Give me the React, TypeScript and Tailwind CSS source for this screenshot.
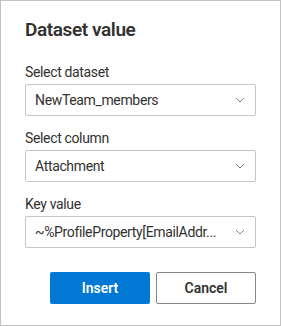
import React from "react";

function Chevron() {
  return (
    <svg width="10" height="6" viewBox="0 0 10 6" className="shrink-0">
      <path d="M1 1 L5 5 L9 1" fill="none" stroke="#797775" strokeWidth="0.9" />
    </svg>
  );
}

function Field({ label, value }: { label: string; value: string }) {
  return (
    <div className="flex flex-col">
      <div className="h-5 leading-5 text-[14px] tracking-[-0.35px] text-[#323130] mb-[2px]">{label}</div>
      <div className="flex items-center h-8 border border-[#c8c6c4] rounded-[2px] pl-[9px] pr-[10px] gap-2">
        <span className="flex-1 whitespace-nowrap text-[14px] tracking-[-0.35px] text-[#323130]">{value}</span>
        <Chevron />
      </div>
    </div>
  );
}

export default function App() {
  return (
    <div
      className="w-[281px] h-[326px] bg-white border border-[#c2c2c2] px-6 pt-[15px] flex flex-col"
      style={{ fontFamily: 'Roboto, "Noto Sans", sans-serif' }}
    >
      <h2 className="text-[19px] leading-7 font-semibold tracking-[-0.4px] text-[#323130]">Dataset value</h2>
      <div className="flex flex-col gap-3 mt-[18px]">
        <Field label="Select dataset" value="NewTeam_members" />
        <Field label="Select column" value="Attachment" />
        <Field label="Key value" value="~%ProfileProperty[EmailAddr..." />
      </div>
      <div className="flex justify-end gap-[6px] mt-6">
        <button className="w-[100px] h-8 rounded-[2px] bg-[#0078d4] text-white text-[14px] font-semibold">
          Insert
        </button>
        <button className="w-[100px] h-8 rounded-[2px] border border-[#8a8886] bg-white text-[#323130] text-[14px] font-semibold">
          Cancel
        </button>
      </div>
    </div>
  );
}
